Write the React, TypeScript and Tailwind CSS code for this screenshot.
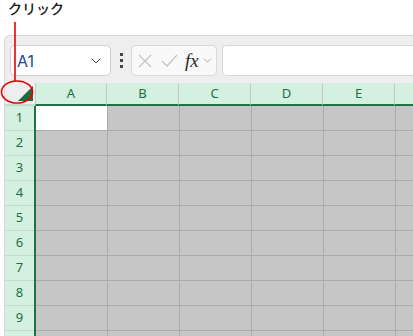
import { ChevronDown } from 'lucide-react'

const cols = ['A', 'B', 'C', 'D', 'E', '']
const rows = [1, 2, 3, 4, 5, 6, 7, 8, 9, 10]

export default function App() {
  return (
    <div
      className="relative w-[413px] h-[336px] overflow-hidden bg-white"
      style={{ fontFamily: '"Noto Sans", "Noto Sans CJK JP", sans-serif' }}
    >
      {/* top blank area with label */}
      <div className="h-[35px] pl-[8px] text-[14px] font-medium leading-[18px] text-[#1a1a1a]">クリック</div>

      {/* Excel frame */}
      <div className="ml-[4px] rounded-tl-[6px] border-t border-l border-[#d6d6d6] bg-[#eeeeee]">
        {/* formula bar */}
        <div className="flex h-[47px] items-start pt-[9px] pl-[5px] gap-[5px]">
          <div className="flex h-[31px] w-[101px] items-center justify-between rounded-[5px] border border-[#d0d0d0] bg-white pl-[6px] pr-[6px]">
            <span className="text-[16px] text-[#1f4a8a]" style={{ fontFamily: 'Inter, "Noto Sans", sans-serif' }}>A1</span>
            <ChevronDown size={16} strokeWidth={1.5} className="text-[#444]" />
          </div>
          <div className="flex h-[31px] w-[10px] flex-col items-center justify-center gap-[3px]">
            <span className="h-[3px] w-[3px] bg-[#444]" />
            <span className="h-[3px] w-[3px] bg-[#444]" />
            <span className="h-[3px] w-[3px] bg-[#444]" />
          </div>
          <div className="flex h-[31px] w-[86px] items-center rounded-[5px] border border-[#d9d9d9] bg-[#f9f9f9] pl-[6px]">
            <svg width="14" height="14" viewBox="0 0 14 14" className="shrink-0">
              <path d="M1 1 L13 13 M13 1 L1 13" stroke="#c4c4c4" strokeWidth="1.3" fill="none" />
            </svg>
            <svg width="17" height="14" viewBox="0 0 17 14" className="ml-[9px] shrink-0">
              <path d="M1 7 L6 12 L16 1" stroke="#c4c4c4" strokeWidth="1.3" fill="none" />
            </svg>
            <span
              className="ml-[7px] text-[19px] italic leading-none text-[#2a2a2a]"
              style={{ fontFamily: '"Liberation Serif", serif' }}
            >
              fx
            </span>
            <ChevronDown size={13} strokeWidth={1.5} className="ml-[2px] text-[#999]" />
          </div>
          <div className="h-[31px] flex-1 rounded-l-[5px] border border-r-0 border-[#d9d9d9] bg-white" />
        </div>

        {/* grid */}
        <div className="flex flex-col">
          {/* column header */}
          <div className="flex h-[23px]">
            <div className="relative w-[30px] shrink-0 border-b-2 border-[#c6dccf] bg-[#eeeeee]">
              <svg width="16" height="16" viewBox="0 0 16 16" className="absolute right-[2px] bottom-[2px]">
                <path d="M16 0 L16 15 L1 15 Z" fill="#1e6b42" />
              </svg>
            </div>
            {cols.map((c, i) => (
              <div
                key={i}
                className={`flex w-[72px] shrink-0 items-center justify-center border-b-2 border-b-[#217346] bg-[#d3f0e0] text-[13px] text-[#1f6e43] ${
                  i === 0 ? 'border-l border-l-[#c8c8c8]' : ''
                } border-r border-r-[#c8c8c8]`}
              >
                {c}
              </div>
            ))}
          </div>
          {rows.map((r) => (
            <div key={r} className="flex h-[25px]">
              <div className="flex w-[29px] shrink-0 items-center justify-center border-b border-b-[#c5d9cc] bg-[#d3f0e0] text-[13px] text-[#1f6e43]">
                {r < 10 ? r : ''}
              </div>
              <div className="w-[2px] shrink-0 bg-[#217346]" />
              {cols.map((c, i) => (
                <div
                  key={i}
                  className={`w-[72px] shrink-0 border-r border-b border-[#ababab] ${
                    r === 1 && i === 0 ? 'bg-white' : 'bg-[#c6c6c6]'
                  }`}
                />
              ))}
            </div>
          ))}
        </div>
      </div>

      {/* red annotation */}
      <svg width="413" height="336" className="pointer-events-none absolute left-0 top-0">
        <line x1="15" y1="22" x2="15" y2="81" stroke="#e60000" strokeWidth="1.6" />
        <ellipse cx="17" cy="92" rx="15.5" ry="11" stroke="#e60000" strokeWidth="1.6" fill="none" />
      </svg>
    </div>
  )
}
